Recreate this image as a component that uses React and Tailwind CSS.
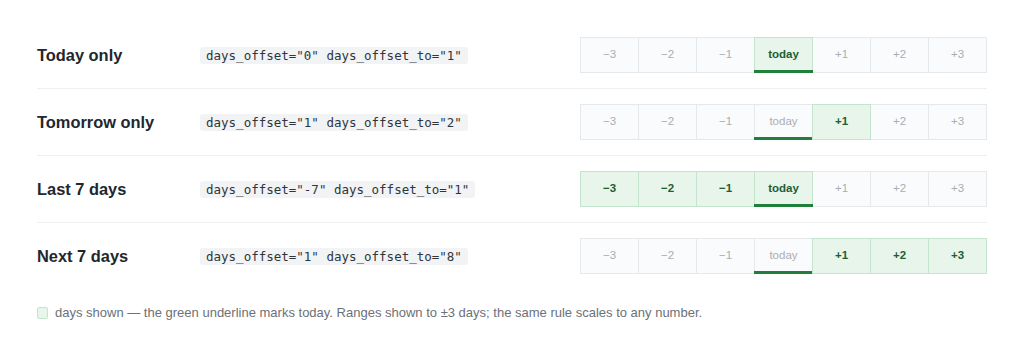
import React from "react";

const DAYS = ["−3", "−2", "−1", "today", "+1", "+2", "+3"];

const ROWS = [
  { label: "Today only", code: 'days_offset="0" days_offset_to="1"', on: [3] },
  { label: "Tomorrow only", code: 'days_offset="1" days_offset_to="2"', on: [4] },
  { label: "Last 7 days", code: 'days_offset="-7" days_offset_to="1"', on: [0, 1, 2, 3] },
  { label: "Next 7 days", code: 'days_offset="1" days_offset_to="8"', on: [4, 5, 6] },
];

/* one strip of seven day cells */
const DayStrip = ({ on }) => (
  <div className="flex">
    {DAYS.map((d, i) => {
      const active = on.includes(i);
      return (
        <div
          key={d}
          className={
            "relative w-[59px] h-9 flex items-center justify-center border text-[11.5px] " +
            (i > 0 ? "-ml-px " : "") +
            (active
              ? "z-10 bg-[#e7f5eb] border-[#c4e5cd] text-[#1d5f33] font-bold"
              : "bg-[#fafbfc] border-[#e6e9ec] text-[#a9aeb4]")
          }
        >
          {d}
          {i === 3 && (
            <span className="absolute -left-px -right-px -bottom-px h-[3px] bg-[#1f7f3b]" />
          )}
        </div>
      );
    })}
  </div>
);

export default function App() {
  return (
    <div className="w-[1024px] h-[349px] bg-white px-[37px] pt-[22px] font-['Liberation_Sans',Arial,sans-serif]">
      {ROWS.map((row, idx) => (
        <div
          key={row.label}
          className={
            "flex items-center py-[15px] " +
            (idx < ROWS.length - 1 ? "border-b border-[#eef0f2]" : "")
          }
        >
          <div className="w-[163px] pt-px text-[16.4px] font-bold text-[#22272d]">
            {row.label}
          </div>
          <div className="flex-1">
            <code className="inline-block bg-[#f1f3f5] rounded-[3px] px-[6px] leading-[17px] text-[12.5px] text-[#2f353b] font-['DejaVu_Sans_Mono',monospace]">
              {row.code}
            </code>
          </div>
          <DayStrip on={row.on} />
        </div>
      ))}

      {/* ---------- Legend ---------- */}
      <div className="mt-[14px] flex items-center gap-[7px] text-[13px] text-[#6b7178]">
        <span className="w-[11px] h-[12px] rounded-[2px] bg-[#e7f5eb] border border-[#c4e5cd]" />
        <span>
          days shown — the green underline marks today. Ranges shown to ±3
          days; the same rule scales to any number.
        </span>
      </div>
    </div>
  );
}
